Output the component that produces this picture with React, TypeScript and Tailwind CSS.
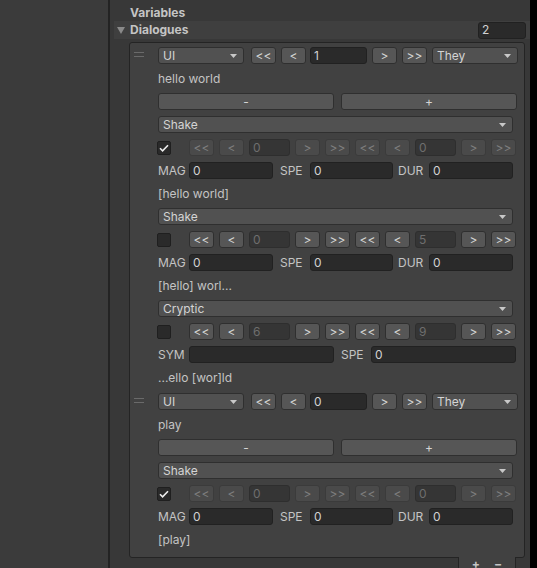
import React from 'react';

function Btn({ label, dim, className }: { label: string; dim?: boolean; className?: string }) {
  return (
    <div
      className={`flex h-[17px] shrink-0 items-center justify-center rounded-[3px] border text-[12px] leading-none ${
        dim ? 'border-[#3b3b3b] bg-[#4a4a4a] text-[#7e7e7e]' : 'border-[#2f2f2f] bg-[#565656] text-[#d4d4d4]'
      } ${className ?? 'w-[25px]'}`}
    >
      {label}
    </div>
  );
}

function Dropdown({ label, className }: { label: string; className: string }) {
  return (
    <div
      className={`flex h-[17px] shrink-0 items-center justify-between rounded-[3px] border border-[#2f2f2f] bg-[#515151] pl-[4px] pr-[6px] text-[12px] text-[#d4d4d4] ${className}`}
    >
      <span>{label}</span>
      <svg width="7" height="4" viewBox="0 0 7 4">
        <path d="M0 0h7L3.5 4z" fill="#c8c8c8" />
      </svg>
    </div>
  );
}

function Field({ value, dim, className }: { value: string; dim?: boolean; className: string }) {
  return (
    <div
      className={`flex h-[17px] shrink-0 items-center rounded-[3px] border pl-[3px] text-[12px] ${
        dim ? 'border-[#2e2e2e] bg-[#353535] text-[#6e6e6e]' : 'border-[#212121] bg-[#2a2a2a] text-[#d2d2d2]'
      } ${className}`}
    >
      {value}
    </div>
  );
}

function Label({ text }: { text: string }) {
  return <div className="flex h-[17px] items-center text-[12px] text-[#c4c4c4]">{text}</div>;
}

function Check({ checked }: { checked?: boolean }) {
  return (
    <div className="-ml-[1px] flex h-[14px] w-[14px] shrink-0 items-center justify-center rounded-[2px] border border-[#1f1f1f] bg-[#2a2a2a]">
      {checked && (
        <svg width="10" height="8" viewBox="0 0 10 8">
          <path d="M1 4.2l2.6 2.6L9 1.2" stroke="#eeeeee" strokeWidth="1.6" fill="none" />
        </svg>
      )}
    </div>
  );
}

function StepRow({ checked, a, b }: { checked?: boolean; a: string; b: string }) {
  return (
    <div className="flex h-[17px] items-center">
      <Check checked={checked} />
      <div className="ml-[18px] flex gap-[5px]">
        <Btn label="<<" dim={checked} />
        <Btn label="<" dim={checked} />
        <Field value={a} dim className="w-[41px]" />
        <Btn label=">" dim={checked} />
        <Btn label=">>" dim={checked} />
        <Btn label="<<" dim={checked} />
        <Btn label="<" dim={checked} />
        <Field value={b} dim className="w-[41px]" />
        <Btn label=">" dim={checked} />
        <Btn label=">>" dim={checked} />
      </div>
    </div>
  );
}

function ShakeParams() {
  return (
    <div className="flex h-[17px] items-center text-[12px] text-[#c4c4c4]">
      <span className="w-[31px]">MAG</span>
      <Field value="0" className="w-[84px]" />
      <span className="ml-[7px] w-[30px]">SPE</span>
      <Field value="0" className="w-[83px]" />
      <span className="ml-[5px] w-[31px]">DUR</span>
      <Field value="0" className="w-[84px]" />
    </div>
  );
}

function CrypticParams() {
  return (
    <div className="flex h-[17px] items-center text-[12px] text-[#c4c4c4]">
      <span className="w-[31px]">SYM</span>
      <Field value="" className="w-[145px]" />
      <span className="ml-[7px] w-[30px]">SPE</span>
      <Field value="0" className="w-[145px]" />
    </div>
  );
}

function Header({ index }: { index: string }) {
  return (
    <div className="flex h-[17px] items-center">
      <Dropdown label="UI" className="w-[86px]" />
      <Btn label="<<" className="ml-[7px] w-[25px]" />
      <Btn label="<" className="ml-[5px] w-[25px]" />
      <Field value={index} className="ml-[4px] w-[57px]" />
      <Btn label=">" className="ml-[5px] w-[25px]" />
      <Btn label=">>" className="ml-[5px] w-[25px]" />
      <Dropdown label="They" className="ml-[5px] w-[86px]" />
    </div>
  );
}

function PlusMinus() {
  return (
    <div className="flex h-[17px] gap-[7px]">
      <Btn label="-" className="w-[176px]" />
      <Btn label="+" className="w-[176px]" />
    </div>
  );
}

function Element({ children }: { children: React.ReactNode }) {
  return (
    <div className="flex">
      <div className="w-[28px] shrink-0 pl-[4px] pt-[5px]">
        <div className="h-[1px] w-[10px] bg-[#6a6a6a]" />
        <div className="mt-[3px] h-[1px] w-[10px] bg-[#6a6a6a]" />
      </div>
      <div className="flex flex-col gap-[6px]">{children}</div>
    </div>
  );
}

export default function App() {
  return (
    <div className="flex h-[568px] w-[537px] overflow-hidden bg-[#383838] font-['Inter','Noto_Sans',sans-serif]">
      <div className="w-[108px] shrink-0 bg-[#3b3b3b]" />
      <div className="w-[2px] shrink-0 bg-[#232323]" />
      <div className="flex w-[420px] shrink-0 flex-col">
        <div className="mt-[4px] flex h-[17px] items-center pl-[20px] text-[12px] font-bold text-[#c4c4c4]">
          Variables
        </div>
        <div className="ml-[4px] flex h-[18px] items-center bg-[#3f3f3f]">
          <svg width="8" height="7" viewBox="0 0 8 7" className="ml-[3px]">
            <path d="M0 0h8L4 7z" fill="#8a8a8a" />
          </svg>
          <span className="ml-[5px] text-[12px] font-bold text-[#c4c4c4]">Dialogues</span>
          <Field value="2" className="ml-auto mr-[4px] w-[48px]" />
        </div>
        <div className="ml-[19px] mt-[3px] flex w-[396px] flex-col gap-[7px] rounded-[3px] border border-[#242424] bg-[#414141] pb-[9px] pt-[4px]">
          <Element>
            <Header index="1" />
            <Label text="hello world" />
            <PlusMinus />
            <Dropdown label="Shake" className="w-[355px]" />
            <StepRow checked a="0" b="0" />
            <ShakeParams />
            <Label text="[hello world]" />
            <Dropdown label="Shake" className="w-[355px]" />
            <StepRow a="0" b="5" />
            <ShakeParams />
            <Label text="[hello] worl..." />
            <Dropdown label="Cryptic" className="w-[355px]" />
            <StepRow a="6" b="9" />
            <CrypticParams />
            <Label text="...ello [wor]ld" />
          </Element>
          <Element>
            <Header index="0" />
            <Label text="play" />
            <PlusMinus />
            <Dropdown label="Shake" className="w-[355px]" />
            <StepRow checked a="0" b="0" />
            <ShakeParams />
            <Label text="[play]" />
          </Element>
        </div>
        <div className="-mt-[1px] ml-[348px] flex h-[20px] w-[58px] shrink-0 items-start justify-center gap-[14px] rounded-b-[3px] border border-t-0 border-[#242424] bg-[#414141] pt-[1px] text-[12px] font-bold leading-[12px] text-[#c4c4c4]">
          <span>+</span>
          <span>−</span>
        </div>
      </div>
      <div className="flex-1 bg-black" />
    </div>
  );
}
